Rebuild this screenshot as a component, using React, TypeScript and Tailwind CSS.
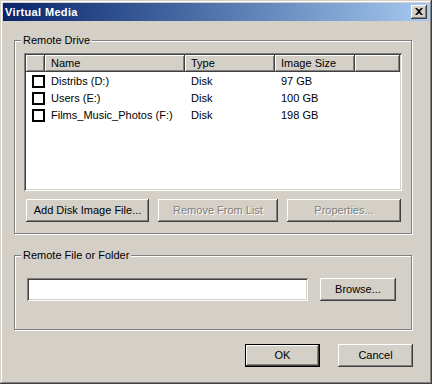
import React from "react";

const raised =
  "shadow-[inset_-1px_-1px_#404040,inset_1px_1px_#ffffff,inset_-2px_-2px_#808080,inset_2px_2px_#d4d0c8]";
const sunken =
  "shadow-[inset_1px_1px_#808080,inset_-1px_-1px_#ffffff,inset_2px_2px_#404040,inset_-2px_-2px_#d4d0c8]";
const headerCell =
  "h-[17px] flex items-center pl-[6px] shrink-0 shadow-[inset_-1px_-1px_#404040,inset_1px_1px_#ffffff,inset_-2px_-2px_#808080]";

function Btn({
  children,
  w,
  disabled,
  def,
}: {
  children: React.ReactNode;
  w: string;
  disabled?: boolean;
  def?: boolean;
}) {
  return (
    <div
      className={`${w} h-[23px] shrink-0 bg-[#d4d0c8] flex items-center justify-center ${
        def
          ? "border border-black shadow-[inset_-1px_-1px_#404040,inset_1px_1px_#ffffff,inset_-2px_-2px_#808080]"
          : raised
      } ${disabled ? "text-[#808080] [text-shadow:1px_1px_0_#ffffff]" : "text-black"}`}
    >
      {children}
    </div>
  );
}

const rows = [
  { name: "Distribs (D:)", type: "Disk", size: "97 GB" },
  { name: "Users (E:)", type: "Disk", size: "100 GB" },
  { name: "Films_Music_Photos (F:)", type: "Disk", size: "198 GB" },
];

export default function App() {
  return (
    <div className="w-[432px] h-[384px] bg-[#d4d0c8] p-[3px] flex flex-col font-['Liberation_Sans',Arial,sans-serif] text-[11px] text-black shadow-[inset_-1px_-1px_#404040,inset_1px_1px_#d4d0c8,inset_-2px_-2px_#808080,inset_2px_2px_#ffffff]">
      {/* Title bar */}
      <div className="h-[18px] shrink-0 flex items-center justify-between pl-[2px] pr-[2px] bg-gradient-to-r from-[#0a246a] to-[#a6caf0]">
        <span className="font-bold text-white text-[11px] tracking-[0.35px] leading-none">
          Virtual Media
        </span>
        <div className={`w-[16px] h-[14px] bg-[#d4d0c8] flex items-center justify-center ${raised}`}>
          <svg width="8" height="7" viewBox="0 0 8 7" className="-mt-[1px]">
            <path d="M0 0h2l2 2 2-2h2L5 3.5 8 7H6L4 5 2 7H0l3-3.5z" fill="#000" />
          </svg>
        </div>
      </div>

      {/* Remote Drive group */}
      <div className="relative ml-[11px] mt-[19px] w-[398px] h-[194px] shrink-0 border border-[#808080] shadow-[1px_1px_0_#ffffff,inset_1px_1px_0_#ffffff]">
        <span className="absolute -top-[8px] left-[6px] px-[2px] bg-[#d4d0c8] leading-[14px]">
          Remote Drive
        </span>
        <div className={`ml-[9px] mt-[12px] w-[378px] h-[138px] bg-white p-[2px] ${sunken}`}>
          <div className="flex h-[17px] bg-[#d4d0c8]">
            <div className={`${headerCell} w-[19px]`} />
            <div className={`${headerCell} w-[140px]`}>Name</div>
            <div className={`${headerCell} w-[90px]`}>Type</div>
            <div className={`${headerCell} w-[80px]`}>Image Size</div>
            <div className={`${headerCell} w-[45px]`} />
          </div>
          <div className="pt-[1px]">
            {rows.map((r) => (
              <div key={r.name} className="flex items-center h-[17px]">
                <div className="w-[19px] shrink-0">
                  <div className="ml-[6px] w-[13px] h-[13px] border-2 border-black bg-white" />
                </div>
                <div className="w-[140px] pl-[6px] shrink-0 whitespace-nowrap">{r.name}</div>
                <div className="w-[90px] pl-[6px] shrink-0">{r.type}</div>
                <div className="w-[80px] pl-[6px] shrink-0">{r.size}</div>
              </div>
            ))}
          </div>
        </div>
        <div className="flex ml-[11px] mt-[8px] gap-[9px]">
          <Btn w="w-[123px]">Add Disk Image File...</Btn>
          <Btn w="w-[120px]" disabled>
            Remove From List
          </Btn>
          <Btn w="w-[114px]" disabled>
            Properties...
          </Btn>
        </div>
      </div>

      {/* Remote File or Folder group */}
      <div className="relative ml-[11px] mt-[21px] w-[398px] h-[75px] shrink-0 border border-[#808080] shadow-[1px_1px_0_#ffffff,inset_1px_1px_0_#ffffff]">
        <span className="absolute -top-[8px] left-[6px] px-[2px] bg-[#d4d0c8] leading-[14px]">
          Remote File or Folder
        </span>
        <div className="flex ml-[12px] mt-[22px] gap-[12px]">
          <div className={`w-[281px] h-[23px] bg-white ${sunken}`} />
          <Btn w="w-[76px]">Browse...</Btn>
        </div>
      </div>

      {/* OK / Cancel */}
      <div className="flex justify-end mt-[14px] mr-[16px] gap-[18px]">
        <Btn w="w-[75px]" def>
          OK
        </Btn>
        <Btn w="w-[75px]">Cancel</Btn>
      </div>
    </div>
  );
}
